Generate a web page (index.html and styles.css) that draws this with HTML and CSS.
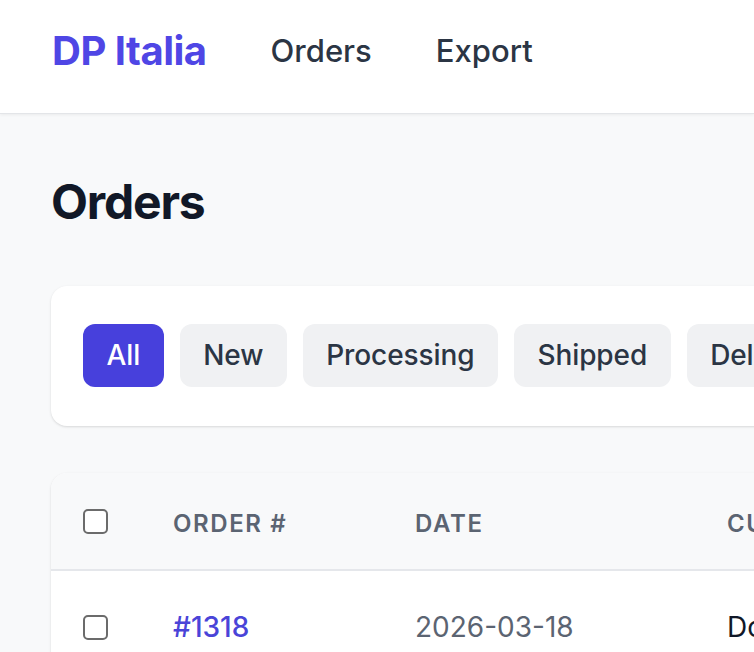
FILE: index.html
```html
<!DOCTYPE html>
<html lang="en">
<head>
<meta charset="utf-8">
<title>DP Italia – Orders</title>
<link rel="stylesheet" href="styles.css">
</head>
<body>
<header class="topbar">
  <a class="logo" href="#">DP Italia</a>
  <nav class="nav">
    <a class="nav-link" href="#">Orders</a>
    <a class="nav-link" href="#">Export</a>
  </nav>
</header>
<main class="main">
  <h1 class="title">Orders</h1>
  <section class="card filters">
    <button class="chip chip-active">All</button>
    <button class="chip">New</button>
    <button class="chip">Processing</button>
    <button class="chip">Shipped</button>
    <button class="chip">Delivered</button>
    <button class="chip">Cancelled</button>
  </section>
  <section class="card table-card">
    <table class="orders">
      <thead>
        <tr>
          <th class="col-check"><input type="checkbox" class="check"></th>
          <th class="col-order">Order #</th>
          <th class="col-date">Date</th>
          <th class="col-customer">Customer</th>
          <th class="col-total">Total</th>
          <th class="col-status">Status</th>
        </tr>
      </thead>
      <tbody>
        <tr>
          <td class="col-check"><input type="checkbox" class="check"></td>
          <td class="col-order"><a class="order-link" href="#">#1318</a></td>
          <td class="col-date muted">2026-03-18</td>
          <td class="col-customer">Donatella Rossi</td>
          <td class="col-total">€ 249,00</td>
          <td class="col-status">New</td>
        </tr>
        <tr>
          <td class="col-check"><input type="checkbox" class="check"></td>
          <td class="col-order"><a class="order-link" href="#">#1317</a></td>
          <td class="col-date muted">2026-03-17</td>
          <td class="col-customer">Marco Bianchi</td>
          <td class="col-total">€ 89,50</td>
          <td class="col-status">Processing</td>
        </tr>
      </tbody>
    </table>
  </section>
</main>
</body>
</html>
```
FILE: styles.css
```css
html, body {
  margin: 0;
  padding: 0;
  overflow: hidden;
}
body {
  background: #f8f9fa;
  font-family: Inter, "Noto Sans", "Liberation Sans", sans-serif;
  color: #111827;
}
.topbar {
  display: flex;
  align-items: center;
  gap: 64px;
  height: 114px;
  box-sizing: border-box;
  padding: 2px 51px 13px 52px;
  background: #ffffff;
  border-bottom: 1px solid #e3e5e8;
  box-shadow: 0 1px 3px rgba(0, 0, 0, 0.06);
}
.logo {
  font-size: 40px;
  line-height: 40px;
  font-weight: 700;
  color: #4f46e5;
  text-decoration: none;
  letter-spacing: -0.5px;
}
.nav {
  display: flex;
  gap: 64px;
}
.nav-link {
  font-size: 31px;
  line-height: 40px;
  font-weight: 500;
  color: #2b3544;
  text-decoration: none;
}
.main {
  width: 1700px;
  padding: 56px 51px;
}
.title {
  margin: 0 0 52px;
  font-size: 48px;
  line-height: 64px;
  font-weight: 700;
  letter-spacing: -1.2px;
  color: #111827;
}
.card {
  background: #ffffff;
  border-radius: 16px;
  box-shadow: 0 1px 3px rgba(0, 0, 0, 0.1), 0 1px 2px rgba(0, 0, 0, 0.04);
}
.filters {
  display: flex;
  gap: 16px;
  padding: 38px 32px 39px;
  margin-bottom: 47px;
}
.chip {
  font-family: inherit;
  font-size: 28px;
  line-height: 39px;
  font-weight: 500;
  letter-spacing: -0.1px;
  padding: 12px 23.5px;
  border: 0;
  border-radius: 12px;
  background: #f0f1f3;
  color: #2b3544;
  white-space: nowrap;
}
.chip-active {
  background: #4740dc;
  color: #ffffff;
}
.table-card {
  overflow: hidden;
}
.orders {
  width: 100%;
  border-collapse: collapse;
  table-layout: fixed;
}
.orders th {
  background: #f8f9fa;
  text-align: left;
  font-size: 24px;
  line-height: 32px;
  font-weight: 600;
  letter-spacing: 1.6px;
  text-transform: uppercase;
  color: #5b6472;
  padding: 35px 32px 29px;
  border-bottom: 2px solid #e5e7eb;
  white-space: nowrap;
}
.orders td {
  font-size: 28px;
  line-height: 40px;
  padding: 36px 32px;
  color: #111827;
  white-space: nowrap;
}
.orders th.col-check, .orders td.col-check {
  width: 26px;
  line-height: 0;
}
.orders th.col-check {
  padding: 32px 32px;
}
.col-order { width: 178px; }
.col-date { width: 248px; }
.col-customer { width: 300px; }
.col-total { width: 200px; }
.orders td.muted { color: #5b6472; }
.order-link {
  color: #4a44d8;
  font-weight: 500;
  text-decoration: none;
}
.check {
  appearance: none;
  -webkit-appearance: none;
  margin: 0;
  width: 25px;
  height: 25px;
  border: 2px solid #6b6b6b;
  border-radius: 5px;
  background: #ffffff;
  vertical-align: middle;
}
```
